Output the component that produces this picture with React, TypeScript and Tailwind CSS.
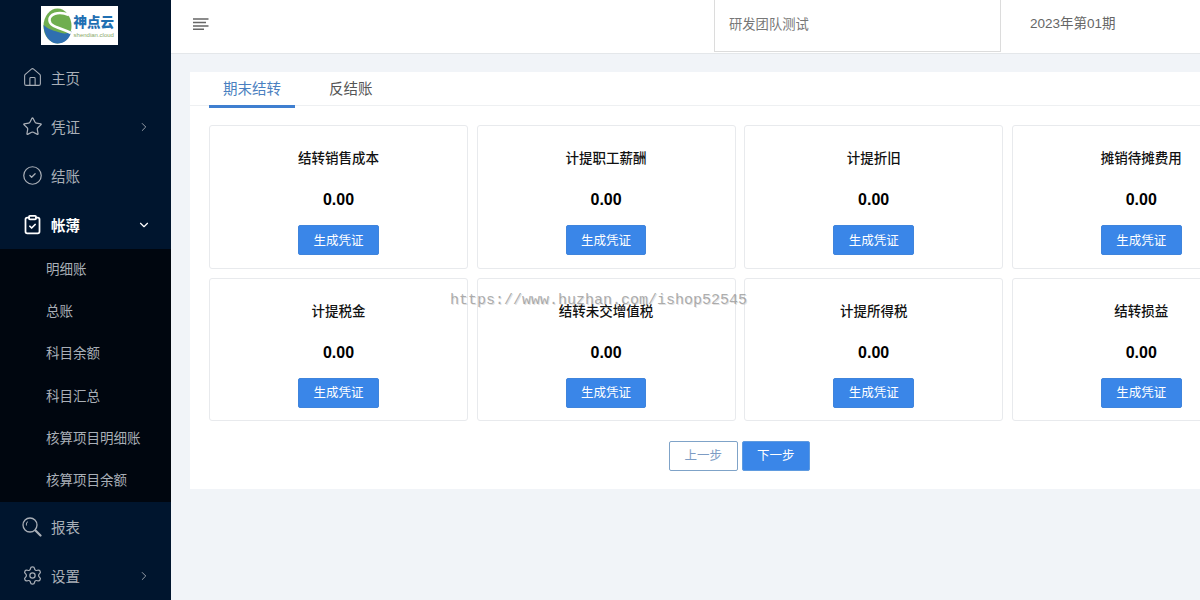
import { ChevronDown, ChevronRight, CircleCheck, ClipboardCheck, House, Settings, Star } from 'lucide-react'
import type { ReactNode } from 'react'

const cards = ['结转销售成本', '计提职工薪酬', '计提折旧', '摊销待摊费用', '计提税金', '结转未交增值税', '计提所得税', '结转损益']
const subMenu = ['明细账', '总账', '科目余额', '科目汇总', '核算项目明细账', '核算项目余额']

function NavItem({ icon, label, active, arrow }: { icon: ReactNode; label: string; active?: boolean; arrow?: 'right' | 'down' }) {
  return (
    <div className={`flex h-[49px] items-center pr-[20px] pl-[22px] text-[14.500px] ${active ? 'font-bold text-white' : 'text-[#a9afb7]'}`}>
      <span className="flex w-[29px] shrink-0">{icon}</span>
      <span className="flex-1">{label}</span>
      {arrow === 'right' && <ChevronRight className="h-3.5 w-3.5" strokeWidth={1.5} />}
      {arrow === 'down' && <ChevronDown className="h-3.5 w-3.5" strokeWidth={2} />}
    </div>
  )
}

function ReportIcon() {
  return (
    <svg viewBox="0 0 20 20" className="h-5 w-5" fill="none" stroke="currentColor">
      <circle cx="8" cy="8" r="7" strokeWidth="1.300" />
      <path d="M4.500 8.500C4 6.500 5 5 6 4.500" strokeWidth="1" />
      <path d="M13.500 13.500L18.500 18.500" strokeWidth="2.200" strokeLinecap="round" />
    </svg>
  )
}

function Logo() {
  return (
    <div className="flex h-[39px] w-[77px] items-center gap-[2px] bg-white pl-[2px]">
      <svg viewBox="0 0 29 36" className="h-[36px] w-[29px] shrink-0">
        <ellipse cx="14.500" cy="18" rx="14" ry="17.500" fill="#6fae4f" />
        <path d="M0.500 17C5 21 9 22 15 24C20 26 25 26 28.500 23C27 31 21 35.500 14.500 35.500C7 35.500 1 28 0.500 17Z" fill="#2f6fb0" />
        <path d="M26 7C15 2.500 6 6.500 6.500 12.500C7 19 17 19.500 28 25" fill="none" stroke="#fff" strokeWidth="2.600" />
      </svg>
      <div className="flex min-w-0 flex-col items-center">
        <span className="font-['Noto_Sans_CJK_SC'] text-[13.500px] leading-[20px] font-black text-[#1f6fb2]">神点云</span>
        <span className="font-['Liberation_Sans'] text-[6px] leading-[9px] whitespace-nowrap text-[#8aa86a]">shendian.cloud</span>
      </div>
    </div>
  )
}

function Card({ title }: { title: string }) {
  return (
    <div className="flex h-[143.500px] flex-col items-center rounded-[3px] border border-[#e8eaed] bg-white pt-[22px]">
      <div className="text-[13.500px] leading-[18px] font-medium text-[#111]">{title}</div>
      <div className="mt-[25px] font-['Liberation_Sans'] text-base leading-[18px] font-bold text-black">0.00</div>
      <button className="mt-[16px] h-[30px] w-[80.500px] rounded-[2px] border border-[#3f84dc] bg-[#3a86e8] text-[12.500px] text-white">生成凭证</button>
    </div>
  )
}

export default function App() {
  return (
    <div className="relative flex h-[600px] w-[1200px] overflow-hidden bg-[#f1f4f8] font-['Noto_Sans_CJK_SC','Liberation_Sans',sans-serif]">
      <aside className="w-[171px] shrink-0 bg-[#00152e]">
        <div className="flex h-[53px] justify-center pt-[6px] pr-[13px]">
          <Logo />
        </div>
        <NavItem icon={<House className="h-[21px] w-[21px]" strokeWidth={1.25} />} label="主页" />
        <NavItem icon={<Star className="h-[21px] w-[21px]" strokeWidth={1.4} />} label="凭证" arrow="right" />
        <NavItem icon={<CircleCheck className="h-[21px] w-[21px]" strokeWidth={1.4} />} label="结账" />
        <NavItem icon={<ClipboardCheck className="h-[21px] w-[21px]" strokeWidth={2} />} label="帐薄" active arrow="down" />
        <div className="bg-[#00060f]">
          {subMenu.map(item => (
            <div key={item} className="flex h-[42.200px] items-center pb-[4px] pl-[46px] text-[13.500px] text-[#a9afb7]">
              {item}
            </div>
          ))}
        </div>
        <NavItem icon={<ReportIcon />} label="报表" />
        <NavItem icon={<Settings className="h-[21px] w-[21px]" strokeWidth={1.4} />} label="设置" arrow="right" />
      </aside>

      <div className="min-w-0 flex-1">
        <header className="flex h-[54px] border-b border-[#e4e7ea] bg-white">
          <div className="w-[543px] shrink-0 pt-[18px] pl-[22px]">
            <svg viewBox="0 0 16 12" className="h-3 w-4" fill="none" stroke="#666" strokeWidth="1.500">
              <path d="M0 1h15.500M0 4.500h13M0 8h15.500M0 11.300h11" />
            </svg>
          </div>
          <div className="flex h-[52px] w-[287px] shrink-0 items-center border-x border-b border-[#dcdcdc] pb-[3px] pl-[14px] text-[13.300px] text-[#777]">研发团队测试</div>
          <div className="flex h-[49px] items-center pl-[29px] font-['Liberation_Sans','Noto_Sans_CJK_SC',sans-serif] text-[13.500px] text-[#666]">2023年第01期</div>
        </header>

        <main className="mt-[18px] ml-[19px] h-[417px] w-[1099px] bg-white">
          <div className="flex h-[34px] gap-[20px] border-b border-[#eef0f2] pl-[19px]">
            <div className="h-[36px] border-b-[3px] border-[#3f7fd0] px-[14px] text-[14.500px] leading-[31px] text-[#4a7fc0]">期末结转</div>
            <div className="px-[14px] text-[14.500px] leading-[31px] text-[#555]">反结账</div>
          </div>
          <div className="mt-[19px] grid grid-cols-[repeat(4,259px)] gap-x-[8.600px] gap-y-[9px] pl-[19px]">
            {cards.map(title => (
              <Card key={title} title={title} />
            ))}
          </div>
          <div className="mt-[20px] flex justify-center gap-[4px]">
            <button className="h-[29.500px] w-[68.500px] rounded-[2px] border border-[#7fa3c8] bg-white pb-[1px] text-[12.500px] text-[#7d9cc4]">上一步</button>
            <button className="h-[29.500px] w-[68.500px] rounded-[2px] border border-[#5f9be0] bg-[#3a86e8] pb-[1px] text-[12.500px] text-white">下一步</button>
          </div>
        </main>
      </div>

      <div className="pointer-events-none absolute top-[291px] left-[450px] font-['Liberation_Mono'] text-[15px] leading-[20px] whitespace-nowrap text-[#8a8a8a]/70 [text-shadow:1px_1px_0_rgba(170,170,170,0.35)]">
        https://www.huzhan.com/ishop52545
      </div>
    </div>
  )
}
